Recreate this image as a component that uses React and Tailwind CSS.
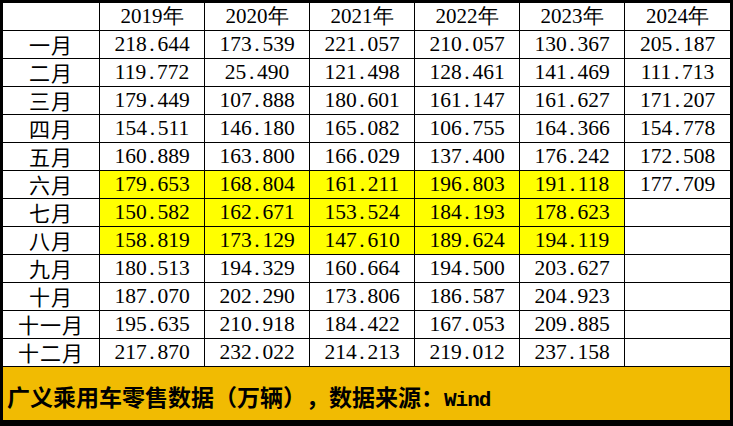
import React from "react";

const years = ["2019年", "2020年", "2021年", "2022年", "2023年", "2024年"];
const rows = [
  ["一月", "218.644", "173.539", "221.057", "210.057", "130.367", "205.187"],
  ["二月", "119.772", "25.490", "121.498", "128.461", "141.469", "111.713"],
  ["三月", "179.449", "107.888", "180.601", "161.147", "161.627", "171.207"],
  ["四月", "154.511", "146.180", "165.082", "106.755", "164.366", "154.778"],
  ["五月", "160.889", "163.800", "166.029", "137.400", "176.242", "172.508"],
  ["六月", "179.653", "168.804", "161.211", "196.803", "191.118", "177.709"],
  ["七月", "150.582", "162.671", "153.524", "184.193", "178.623", ""],
  ["八月", "158.819", "173.129", "147.610", "189.624", "194.119", ""],
  ["九月", "180.513", "194.329", "160.664", "194.500", "203.627", ""],
  ["十月", "187.070", "202.290", "173.806", "186.587", "204.923", ""],
  ["十一月", "195.635", "210.918", "184.422", "167.053", "209.885", ""],
  ["十二月", "217.870", "232.022", "214.213", "219.012", "237.158", ""],
];

function Num({ v }) {
  if (!v) return null;
  const [a, b] = v.split(".");
  return (
    <span className="whitespace-nowrap font-[Liberation_Serif] text-[21.5px]">
      {a}
      <span className="inline-block w-[0.5em] text-center">.</span>
      {b}
    </span>
  );
}

function Cell({ children, last, yellow }) {
  return (
    <div
      className={
        "h-[28px] flex items-center justify-center border-b border-black " +
        (last ? "" : "border-r ") +
        (yellow ? "bg-[#ffff00]" : "bg-white")
      }
    >
      {children}
    </div>
  );
}

export default function App() {
  return (
    <div className="w-[733px] h-[426px] bg-white border-l-[3px] border-r-[3px] border-t-[3px] border-b-[6px] border-black flex flex-col font-[Liberation_Serif] text-[21px] leading-none text-black">
      <div className="grid grid-cols-[97px_repeat(6,105px)]">
        <Cell />
        {years.map((y, i) => (
          <Cell key={y} last={i === 5}>
            <span className="whitespace-nowrap font-[Liberation_Serif]">{y}</span>
          </Cell>
        ))}
        {rows.map((r, ri) => (
          <React.Fragment key={r[0]}>
            <Cell>
              <span className="whitespace-nowrap font-[Noto_Sans_CJK_SC] tracking-[1px]">{r[0]}</span>
            </Cell>
            {r.slice(1).map((v, ci) => (
              <Cell
                key={ci}
                last={ci === 5}
                yellow={ri >= 5 && ri <= 7 && ci <= 4}
              >
                <Num v={v} />
              </Cell>
            ))}
          </React.Fragment>
        ))}
      </div>
      <div className="flex-1 bg-[#f1bb02] flex items-center pl-[4px] pt-[8px]">
        <span className="font-[Noto_Sans_CJK_SC] font-bold text-[23px] whitespace-nowrap [text-spacing-trim:space-all]">
          广义乘用车零售数据（万辆），数据来源：
          <span className="font-[Liberation_Mono] text-[21px] tracking-[-1px]">
            Wind
          </span>
        </span>
      </div>
    </div>
  );
}
